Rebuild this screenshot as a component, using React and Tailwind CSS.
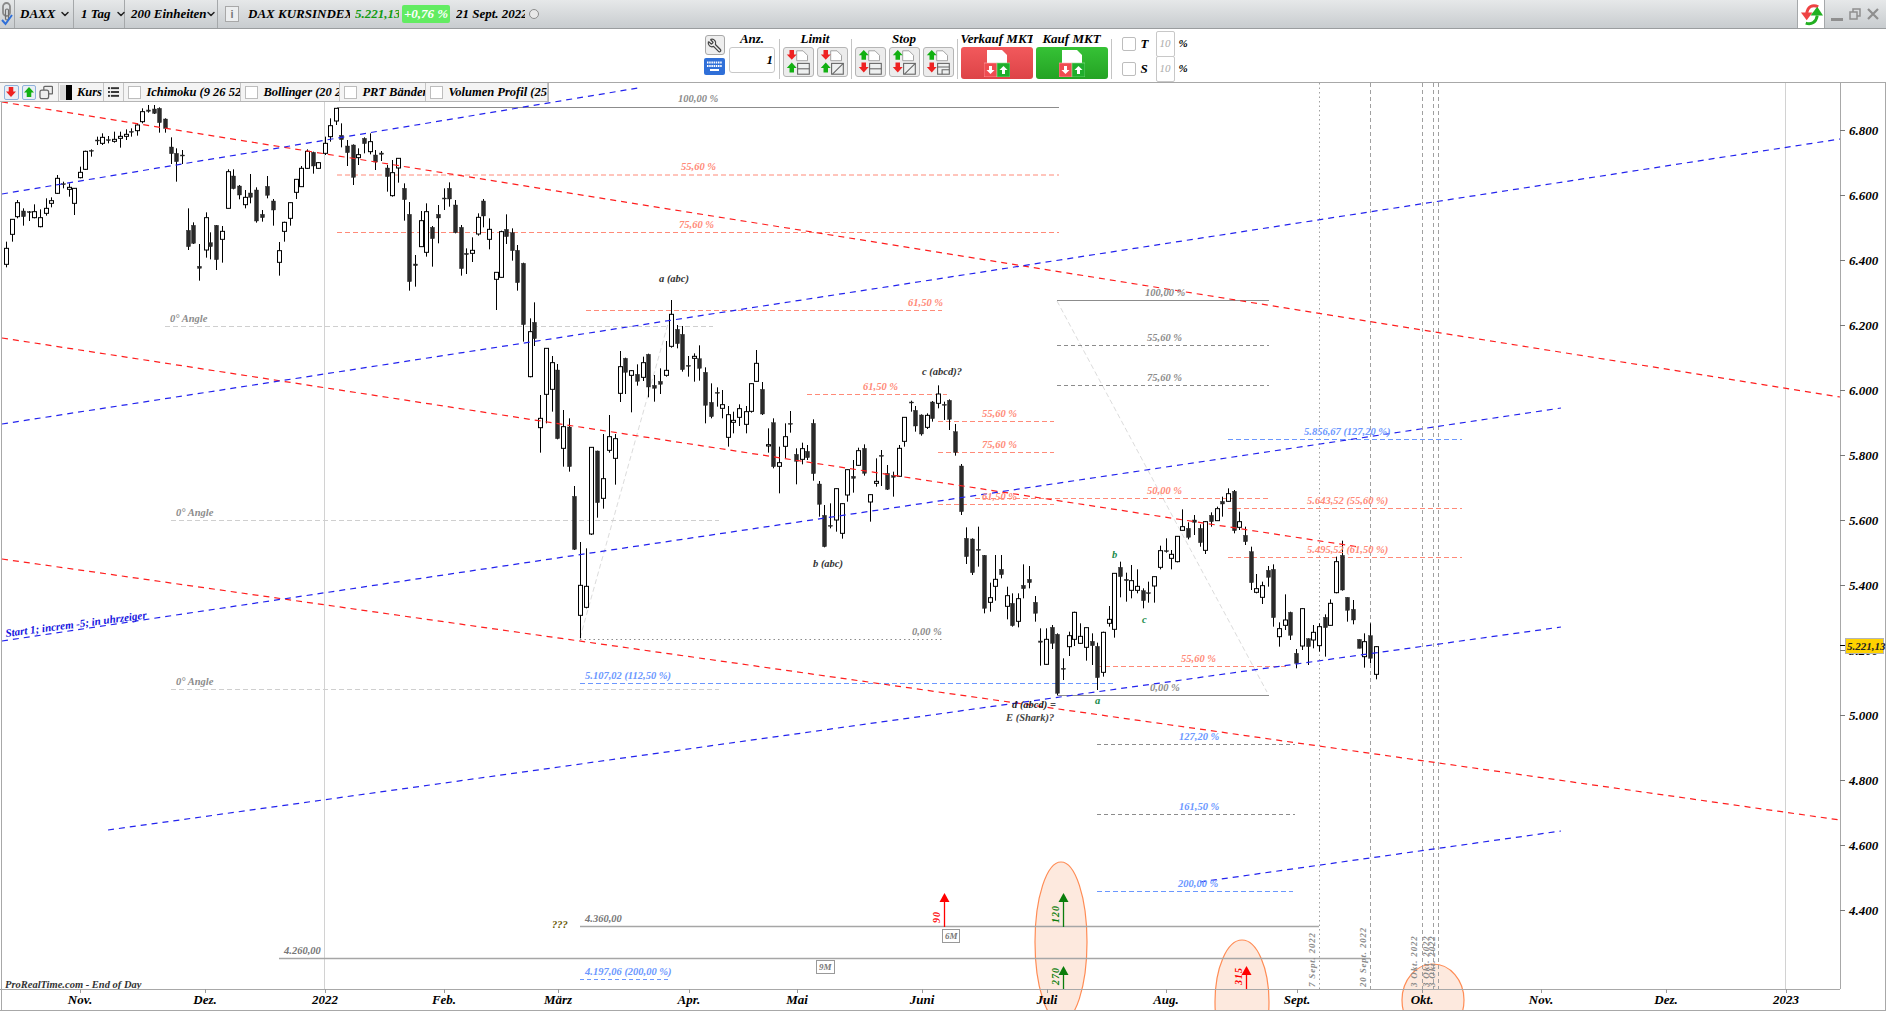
import { ChevronDown, Wrench } from "lucide-react";

// chart readings: [x, high, bodyTop, bodyBottom, low, filled]
const CANDLES_A = [
  [16,455,475,523,532,0],[32,388,388,433,455,0],[45,330,338,380,385,0],[60,355,363,380,407,1],[76,363,365,367,393,1],
  [90,343,365,383,385,0],[105,358,383,410,412,0],[121,325,355,370,377,0],[134,322,332,340,352,0],[150,255,265,310,312,0],
  [165,275,281,284,295,1],[179,280,292,298,320,0],[194,295,295,340,375,0],[210,230,247,263,265,0],[223,182,184,238,240,0],
  [239,178,181,184,200,1],[253,140,150,152,165,1],[267,130,142,160,165,0],[283,138,149,151,160,1],[299,125,148,154,158,0],
  [314,125,139,145,173,0],[328,118,133,139,150,0],[343,115,124,126,140,1],[359,100,105,122,137,0],[372,55,65,95,100,0],
  [388,45,60,64,68,1],[402,45,57,70,72,1],[415,52,55,98,128,1],[431,85,87,115,128,1],[447,142,171,191,222,1],
  [460,175,190,215,275,1],[476,180,195,197,222,1],[491,355,421,470,480,1],[505,397,406,460,462,1],[520,462,529,535,572,1],
  [537,367,383,480,503,0],[549,427,458,470,508,1],[565,405,406,509,540,1],[581,408,424,448,518,0],[597,238,245,355,355,0],
  [608,238,258,296,298,1],[624,285,288,315,328,1],[641,300,322,344,355,0],[654,252,309,322,340,1],[669,292,300,393,398,1],
  [684,360,373,383,395,1],[698,258,289,316,325,1],[713,327,333,360,407,1],[730,456,482,517,557,0],[743,395,397,424,455,0],
  [759,337,338,385,407,0],[774,268,268,307,327,0],[787,228,235,290,290,0],[803,178,184,235,237,0],[818,185,187,228,251,1],
  [832,216,218,235,236,0],[848,140,160,190,195,0],[863,85,107,140,155,0],[879,55,55,93,105,0],[891,100,136,149,172,1],
  [907,150,168,188,228,1],[922,163,165,262,285,1],[936,175,194,203,225,0],[951,142,145,161,190,1],[968,130,155,185,193,0],
  [980,180,195,216,240,1],[995,183,189,193,213,1],[1011,225,234,260,305,1],[1025,210,248,317,320,0],[1041,205,205,234,278,0],
  [1055,280,295,329,392,1],[1069,336,373,575,602,1],[1085,495,522,527,590,1],[1101,363,392,470,470,0],[1114,340,365,487,500,0],
  [1129,408,412,446,530,1],[1144,345,373,384,460,1],[1160,295,324,326,360,1],[1173,277,295,327,350,1],[1189,330,345,428,430,1],
  [1205,405,412,536,557,1],[1218,475,490,494,552,1],[1234,442,481,490,516,0],[1250,370,382,432,437,0],[1262,327,333,378,412,1],
  [1279,385,418,448,478,0],[1295,547,547,568,660,0],[1308,422,425,562,563,0],[1322,373,418,440,462,1],[1338,415,428,482,512,1],
  [1352,465,481,578,602,1],[1367,518,520,704,755,1],[1384,685,725,860,862,0],[1395,637,697,746,768,1],
];

const CANDLES_B = [
  [158,345,415,443,518,0],[173,205,205,343,430,0],[189,228,248,328,395,0],[201,252,270,476,478,1],[218,390,440,505,560,0],
  [232,415,441,560,575,1],[246,618,649,808,810,1],[262,786,916,1006,1075,0],[278,805,919,982,985,0],[291,502,502,762,765,0],
  [306,512,513,668,713,1],[322,462,596,655,686,0],[336,405,470,511,518,0],[352,462,476,535,614,0],[367,213,260,340,366,0],
  [380,233,235,277,342,1],[395,270,272,286,397,0],[410,253,283,304,317,1],[425,230,248,292,303,0],[439,221,223,321,352,1],
  [454,285,316,325,365,1],[470,265,304,313,342,1],[485,183,271,286,290,0],[500,60,103,199,203,0],[515,135,148,191,205,1],
  [528,138,163,269,275,1],[544,228,256,258,290,1],[560,220,229,235,305,0],[573,196,236,265,302,1],[588,262,277,376,430,1],
  [603,310,367,410,415,1],[618,322,337,340,380,1],[633,330,374,385,415,0],[649,378,404,472,500,0],[661,395,421,427,460,0],
  [678,373,386,412,438,0],[694,378,395,433,460,0],[707,310,311,394,398,0],[722,210,250,304,305,0],[737,306,328,402,405,1],
  [753,445,494,498,518,0],[766,415,428,560,565,1],[782,500,548,559,640,0],[798,430,470,499,535,0],[811,393,430,433,458,1],
  [826,505,523,544,613,1],[842,488,506,538,553,0],[855,495,514,533,540,1],[870,418,430,581,602,1],[886,603,612,673,710,1],
  [899,675,706,800,802,1],[915,670,736,739,745,1],[931,625,626,720,755,0],[945,670,671,760,776,0],[960,568,569,645,665,0],
  [975,540,589,595,638,1],[989,503,512,556,558,0],[1003,493,505,580,587,1],[1020,643,644,666,725,0],[1035,535,604,610,620,0],
  [1048,510,526,527,618,1],[1064,555,580,628,630,1],[1079,575,587,592,650,1],[1094,495,505,589,590,0],[1109,412,412,484,500,0],
  [1125,362,366,368,395,1],[1137,378,391,438,455,1],[1152,403,405,462,467,1],[1169,400,406,442,447,0],[1181,363,366,416,425,1],
  [1198,316,342,370,385,0],[1212,365,373,376,420,1],[1225,358,361,418,450,1],[1241,432,455,517,527,1],[1256,552,558,695,705,1],
  [1271,742,775,830,852,1],[1286,775,777,878,885,1],[1302,740,808,811,860,1],[1317,825,826,985,1000,1],[1332,908,953,967,995,0],
  [1347,825,898,919,962,0],[1361,825,868,884,895,1],[1376,920,947,979,1018,0],[1390,940,970,1037,1040,1],[1407,940,956,1024,1042,0],
  [1419,853,916,926,955,1],[1434,858,898,908,925,1],[1450,948,967,1000,1025,1],[1464,1045,1083,1087,1157,1],[1480,1045,1078,1153,1155,0],
  [1495,1035,1042,1090,1107,1],[1508,1060,1063,1240,1245,1],[1524,1135,1165,1168,1200,1],
];

const CANDLES_C = [
  [88,1055,1067,1100,1128,0],[103,995,997,1078,1098,0],[121,1030,1069,1090,1092,0],[139,1042,1043,1102,1142,0],[155,1060,1084,1097,1155,1],
  [171,1088,1099,1193,1230,1],[190,1055,1057,1177,1190,0],[208,978,1018,1030,1040,0],[223,880,880,1048,1073,0],[240,845,862,890,952,1],
  [258,878,898,902,965,1],[274,855,902,931,955,0],[292,868,919,931,940,0],[309,925,932,962,985,1],[325,905,938,940,968,1],
  [343,890,890,918,968,0],[361,797,812,862,868,0],[377,775,812,815,818,1],[394,810,823,835,868,0],[411,768,769,845,847,0],
  [427,688,740,751,751,0],[444,727,745,772,778,1],[462,705,720,727,765,1],[480,733,745,788,800,1],[496,723,725,811,822,0],
  [513,697,706,725,740,1],[532,680,686,722,722,0],[546,650,664,672,710,1],[565,625,641,664,665,0],[581,630,634,752,760,1],
  [598,695,725,742,750,0],[615,740,766,785,795,1],[632,800,815,908,930,1],[649,882,926,937,940,0],[666,905,917,952,972,0],
  [683,858,871,892,920,1],[698,853,868,1013,1040,1],[718,1027,1046,1070,1100,0],[736,943,1020,1036,1050,0],[750,995,997,1066,1080,1],
  [768,1107,1120,1150,1165,1],[787,985,986,1098,1110,0],[804,1075,1076,1100,1155,1],[820,1035,1057,1080,1105,0],[838,1030,1040,1097,1115,0],
  [855,1003,1012,1043,1130,1],[871,958,970,1036,1037,0],[889,830,845,938,940,0],[906,782,826,930,932,1],[921,952,952,991,1025,1],
  [939,960,988,1020,1033,1],[957,1078,1078,1105,1105,1],[973,1060,1085,1130,1163,0],[990,1030,1067,1135,1150,1],[1009,1098,1100,1183,1198,0],
];

const scaled = (rows, ox, oy, sx) =>
  rows.map(([x, h, t, b, l, f]) => ({ x: ox + x / sx, h: oy + h / 3, t: oy + t / 3, b: oy + b / 3, l: oy + l / 3, f }));

const CANDLES = [
  ...scaled(CANDLES_A, 0, 90, 2.613),
  ...scaled(CANDLES_B, 480, 280, 2.613),
  ...scaled(CANDLES_C, 1040, 280, 3),
];

const RED = "#ff1f1f";
const BLUE = "#2323ee";
const SALMON = "#ff8a78";
const SKY = "#6b97ff";
const GREY = "#8c8c8c";

const TREND_LINES = [
  [2, 102, 1840, 397, RED],
  [2, 338, 1359, 547, RED],
  [2, 559, 1840, 820, RED],
  [2, 194, 638, 88, BLUE],
  [2, 424, 1840, 139, BLUE],
  [2, 641, 1561, 408, BLUE],
  [108, 830, 1561, 627, BLUE],
  [1200, 882, 1561, 831, BLUE],
];

// x1, x2, y, colour, dash, width
const LEVELS = [
  [337, 1059, 107, GREY, "", 1.2],
  [337, 1059, 174.5, SALMON, "5 3", 1],
  [337, 1059, 232, SALMON, "5 3", 1],
  [586, 942, 310, SALMON, "5 3", 1],
  [165, 713, 326, "#cfcfcf", "5 3", 1],
  [171, 719, 520, "#cfcfcf", "5 3", 1],
  [171, 719, 689, "#cfcfcf", "5 3", 1],
  [580, 943, 639, GREY, "1.5 3", 1],
  [807, 947, 394, SALMON, "5 3", 1],
  [938, 1054, 421, SALMON, "5 3", 1],
  [938, 1054, 452, SALMON, "5 3", 1],
  [938, 1054, 504, SALMON, "5 3", 1],
  [975, 1269, 498, SALMON, "5 3", 1],
  [1057, 1269, 300, GREY, "", 1.2],
  [1057, 1269, 345, GREY, "4 3", 1],
  [1057, 1269, 385, GREY, "4 3", 1],
  [1057, 1269, 695, GREY, "", 1.2],
  [1097, 1287, 666, SALMON, "5 3", 1],
  [580, 1113, 683, SKY, "5 3", 1],
  [1228, 1462, 439, SKY, "5 3", 1],
  [1228, 1462, 508, SALMON, "5 3", 1],
  [1228, 1462, 557, SALMON, "5 3", 1],
  [1097, 1295, 744, GREY, "4 3", 1],
  [1097, 1295, 814, GREY, "4 3", 1],
  [1097, 1293, 891, SKY, "5 3", 1],
  [580, 1319, 926, "#a6a6a6", "", 1.3],
  [279, 1370, 958, "#a6a6a6", "", 1.3],
  [580, 671, 979, SKY, "4 3", 1],
];

// x, y, text, colour
const LABELS = [
  [678, 102, "100,00 %", GREY],
  [681, 170, "55,60 %", SALMON],
  [679, 228, "75,60 %", SALMON],
  [908, 306, "61,50 %", SALMON],
  [659, 282, "a (abc)", "#333"],
  [170, 322, "0° Angle", GREY],
  [176, 516, "0° Angle", GREY],
  [176, 685, "0° Angle", GREY],
  [912, 635, "0,00 %", GREY],
  [863, 390, "61,50 %", SALMON],
  [922, 375, "c (abcd)?", "#333"],
  [982, 417, "55,60 %", SALMON],
  [982, 448, "75,60 %", SALMON],
  [982, 500, "61,50 %", SALMON],
  [813, 567, "b (abc)", "#333"],
  [1145, 296, "100,00 %", GREY],
  [1147, 341, "55,60 %", GREY],
  [1147, 381, "75,60 %", GREY],
  [1147, 494, "50,00 %", SALMON],
  [1150, 691, "0,00 %", GREY],
  [1181, 662, "55,60 %", SALMON],
  [585, 679, "5.107,02 (112,50 %)", SKY],
  [1304, 435, "5.856,67 (127,20 %)", SKY],
  [1307, 504, "5.643,52 (55,60 %)", SALMON],
  [1307, 553, "5.495,52 (61,50 %)", SALMON],
  [1179, 740, "127,20 %", SKY],
  [1179, 810, "161,50 %", SKY],
  [1178, 887, "200,00 %", SKY],
  [1012, 708, "d (abcd) =", "#222"],
  [1006, 721, "E (Shark)?", "#444"],
  [1112, 558, "b", "#178a4a"],
  [1142, 623, "c", "#178a4a"],
  [1095, 704, "a", "#178a4a"],
  [585, 922, "4.360,00", "#777"],
  [284, 954, "4.260,00", "#777"],
  [552, 928, "???", "#665500"],
  [585, 975, "4.197,06 (200,00 %)", SKY],
  [5, 988, "ProRealTime.com - End of Day", "#333"],
];

const PRICES = ["6.800", "6.600", "6.400", "6.200", "6.000", "5.800", "5.600", "5.400", "5.200", "5.000", "4.800", "4.600", "4.400"];

const MONTHS = [
  [80, "Nov."], [205, "Dez."], [325, "2022"], [444, "Feb."], [558, "März"], [689, "Apr."], [797, "Mai"], [922, "Juni"],
  [1047, "Juli"], [1166, "Aug."], [1297, "Sept."], [1422, "Okt."], [1541, "Nov."], [1666, "Dez."], [1786, "2023"],
];

// vertical date markers
const MARKERS = [
  [1319, "1.5 3", 1315, "7 Sept. 2022"],
  [1370, "4 3", 1366, "20 Sept. 2022"],
  [1422, "4 3", 1417, "3 Okt. 2022"],
  [1433, "4 3", 1429, "3 Okt. 2022"],
  [1438, "4 3", 1435, "3 Okt. 2022"],
];

function Arrow({ x, top, bottom, colour, label }) {
  return (
    <g>
      <line x1={x} x2={x} y1={top + 8} y2={bottom} stroke={colour} strokeWidth="1.3" />
      <polygon points={`${x},${top} ${x + 5},${top + 9} ${x - 5},${top + 9}`} fill={colour} />
      <text
        transform={`rotate(-90 ${x - 5} ${bottom - 4})`}
        x={x - 5}
        y={bottom - 4}
        fontSize="10"
        letterSpacing="1"
        fill={colour}
      >
        {label}
      </text>
    </g>
  );
}

function Chart() {
  return (
    <svg
      viewBox="0 83 1886 928"
      className="block h-full w-full font-['Liberation_Serif',serif] font-bold italic"
    >
      <line x1="324.5" x2="324.5" y1="83" y2="989" stroke="#d2d2d2" />
      <line x1="1785.5" x2="1785.5" y1="83" y2="989" stroke="#d2d2d2" />

      <ellipse cx="1061" cy="942" rx="26" ry="80" fill="#fde9de" stroke="#ff8c55" strokeWidth="1.2" />
      <ellipse cx="1242" cy="1002" rx="27" ry="62" fill="#fde9de" stroke="#ff8c55" strokeWidth="1.2" />
      <ellipse cx="1433" cy="1000" rx="31" ry="36" fill="#fde9de" stroke="#ff8c55" strokeWidth="1.2" />

      <line x1="580" y1="638" x2="671" y2="313" stroke="#dcdcdc" strokeDasharray="5 3" />
      <line x1="1057" y1="301" x2="1267" y2="692" stroke="#dcdcdc" strokeDasharray="5 3" />

      {MARKERS.map(([x, dash]) => (
        <line key={x} x1={x + 0.5} x2={x + 0.5} y1="83" y2="989" stroke="#a0a0a0" strokeDasharray={dash} />
      ))}

      {LEVELS.map(([x1, x2, y, colour, dash, w]) => (
        <line
          key={`${x1}-${y}`}
          x1={x1}
          x2={x2}
          y1={y + 0.5}
          y2={y + 0.5}
          stroke={colour}
          strokeDasharray={dash || undefined}
          strokeWidth={w}
        />
      ))}

      {CANDLES.map((c, i) => {
        const x = Math.round(c.x) + 0.5;
        return (
          <g key={i}>
            <line x1={x} x2={x} y1={c.h} y2={c.l} stroke="#000" />
            <rect
              x={x - 2}
              y={c.t}
              width="4"
              height={Math.max(c.b - c.t, 1)}
              fill={c.f ? "#2a2a2a" : "#fff"}
              stroke={c.f ? "#222" : "#000"}
              strokeWidth={c.f ? 0.4 : 1}
            />
          </g>
        );
      })}

      {TREND_LINES.map(([x1, y1, x2, y2, colour]) => (
        <line
          key={`${x1}-${y1}`}
          x1={x1}
          y1={y1}
          x2={x2}
          y2={y2}
          stroke={colour}
          strokeWidth="1.2"
          strokeDasharray="6 5"
        />
      ))}

      {LABELS.map(([x, y, text, colour]) => (
        <text key={`${x}-${y}`} x={x} y={y} fontSize="10.5" fill={colour}>
          {text}
        </text>
      ))}

      <text transform="rotate(-7.500 6 637)" x="6" y="637" fontSize="11" fill="#1414e0">
        Start 1; increm -5; in uhrzeiger
      </text>

      <Arrow x={944.5} top={893} bottom={927} colour="#ff0000" label="90" />
      <Arrow x={1063.5} top={893} bottom={927} colour="#0b7d0b" label="120" />
      <Arrow x={1063.5} top={966} bottom={989} colour="#0b7d0b" label="270" />
      <Arrow x={1246.5} top={966} bottom={989} colour="#ff0000" label="315" />

      <rect x="942.5" y="929.5" width="17" height="13" fill="#fff" stroke="#999" />
      <text x="945" y="939" fontSize="9" fill="#777">6M</text>
      <rect x="816.5" y="960.5" width="18" height="13" fill="#fff" stroke="#999" />
      <text x="819" y="970" fontSize="9" fill="#777">9M</text>

      {MARKERS.map(([x, , tx, text]) => (
        <text
          key={x}
          transform={`rotate(-90 ${tx} 987)`}
          x={tx}
          y="987"
          fontSize="9"
          letterSpacing="0.8"
          fill="#8a8a8a"
        >
          {text}
        </text>
      ))}

      <line x1="1.5" x2="1.5" y1="83" y2="1011" stroke="#a8a8a8" />
      <line x1="1840.5" x2="1840.5" y1="83" y2="989" stroke="#a8a8a8" />
      <line x1="1885.5" x2="1885.5" y1="83" y2="1011" stroke="#a8a8a8" />
      <line x1="0" x2="1840" y1="989.5" y2="989.5" stroke="#a8a8a8" />
      <line x1="0" x2="1886" y1="1010.5" y2="1010.5" stroke="#a8a8a8" />

      {PRICES.map((p, i) => (
        <g key={p}>
          <line x1="1840" x2="1845" y1={130.5 + i * 65} y2={130.5 + i * 65} stroke="#777" />
          <text x="1849" y={135 + i * 65} fontSize="13" fill="#000">{p}</text>
        </g>
      ))}

      {MONTHS.map(([x, m]) => (
        <g key={x}>
          <line x1={x + 0.5} x2={x + 0.5} y1="989" y2="993" stroke="#999" />
          <text x={x} y="1004" fontSize="13" textAnchor="middle" fill="#000">{m}</text>
        </g>
      ))}

      <line x1="1840" x2="1845" y1="645.5" y2="645.5" stroke="#000" />
      <rect x="1845.5" y="638.5" width="38" height="15" fill="#ffd200" stroke="#b5b5b5" />
      <text x="1847" y="650" fontSize="11" fill="#222">5.221,13</text>
    </svg>
  );
}

function LinkCheckIcon() {
  return (
    <svg viewBox="0 0 14 29" className="h-[29px] w-[14px]">
      <rect x="3" y="3" width="7" height="13" rx="3.5" fill="none" stroke="#8a8a8a" strokeWidth="1.8" />
      <rect x="5.5" y="9" width="3" height="11" rx="1.5" fill="none" stroke="#6f6f6f" strokeWidth="1.2" />
      <path d="M2 20l3.5 4L12 15" fill="none" stroke="#2f6fd8" strokeWidth="2" />
    </svg>
  );
}

function Caret() {
  return <ChevronDown className="ml-[4px] h-[12px] w-[12px] shrink-0 text-[#222]" strokeWidth={3} />;
}

function TopBar() {
  return (
    <div className="flex h-[29px] shrink-0 items-center whitespace-nowrap border-b border-[#9a9d9f] bg-gradient-to-b from-[#e6e8e9] to-[#c8cccf] text-[13px] font-bold italic text-black">
      <div className="flex h-full w-[15px] border-r border-[#a5a8aa]">
        <LinkCheckIcon />
      </div>
      <div className="flex h-full w-[59px] items-center border-r border-[#a5a8aa] pl-[5px]">
        DAXX
        <Caret />
      </div>
      <div className="flex h-full w-[51px] items-center border-r border-[#a5a8aa] pl-[7px]">
        1 Tag
        <Caret />
      </div>
      <div className="flex h-full w-[93px] items-center border-r border-[#a5a8aa] pl-[6px]">
        <span className="w-[70px]">200 Einheiten</span>
        <Caret />
      </div>
      <div className="ml-[7px] flex h-[16px] w-[14px] items-center justify-center border border-[#a8a8a8] bg-[#eceeef] font-['Liberation_Sans',sans-serif] text-[11px] not-italic text-[#777]">
        i
      </div>
      <span className="ml-[9px] w-[102px] overflow-hidden">DAX KURSINDEX</span>
      <span className="ml-[5px] w-[44px] overflow-hidden text-[#129a12]">5.221,13</span>
      <span className="ml-[3px] flex h-[18px] w-[48px] items-center justify-center rounded-[2px] bg-[#62ec62] text-white">
        +0,76 %
      </span>
      <span className="ml-[6px] w-[69px] overflow-hidden">21 Sept. 2022</span>
      <span className="ml-[4px] h-[10px] w-[10px] rounded-full border border-[#8c8c8c] bg-[#e8e8e8]" />
      <div className="ml-auto flex h-full w-[28px] items-center justify-center border-x border-[#a5a8aa] bg-white">
        <svg viewBox="0 0 24 24" className="h-[23px] w-[23px]" fill="none" strokeWidth="3">
          <path d="M19 4C13 1 8 4 7 11" stroke="#ee4444" />
          <path d="M1 10h12l-6 8z" fill="#ee4444" />
          <path d="M6 21c6 2 11-1 12-8" stroke="#22b022" />
          <path d="M11 13h13l-6-9z" fill="#22b022" />
        </svg>
      </div>
      <div className="flex h-full w-[61px] items-center gap-[6px] pl-[6px]">
        <span className="mt-[11px] h-[3px] w-[12px] bg-[#8f8f8f]" />
        <svg viewBox="0 0 12 12" className="h-[12px] w-[12px]" fill="none" stroke="#8f8f8f" strokeWidth="1.5">
          <rect x="1" y="4" width="7" height="7" />
          <path d="M4 4V1h7v7H8" />
        </svg>
        <svg viewBox="0 0 12 12" className="h-[12px] w-[12px]" stroke="#8f8f8f" strokeWidth="2.2">
          <path d="M1 1l10 10M11 1L1 11" />
        </svg>
      </div>
    </div>
  );
}

const ARROW_RED = "M3 0h5v5h3l-5.5 6L0 5h3z";
const ARROW_GREEN = "M5.5 0L11 6H8v5H3V6H0z";

function OrderGlyph({ first, second, shape }) {
  return (
    <svg viewBox="0 0 30 30" className="h-[27px] w-[27px]">
      <path d="M13 2h7l5 5v6H13z" fill="#fff" stroke="#9a9a9a" />
      <g transform="translate(2 1)"><path d={first} fill={first === ARROW_RED ? "#ee2222" : "#12b012"} /></g>
      <g transform="translate(2 15)"><path d={second} fill={second === ARROW_RED ? "#ee2222" : "#12b012"} /></g>
      <rect x="14" y="16" width="13" height="12" fill="#eef0f0" stroke="#666" strokeWidth="1.2" />
      {shape === "flat" && <line x1="14" x2="27" y1="22" y2="22" stroke="#666" strokeWidth="1.2" />}
      {shape === "slope" && <line x1="15" x2="27" y1="28" y2="16" stroke="#666" strokeWidth="1.2" />}
      {shape === "step" && <path d="M14 20h13M19 28v-5h8" fill="none" stroke="#666" strokeWidth="1.2" />}
    </svg>
  );
}

function OrderButton(props) {
  return (
    <button className="flex h-[30px] w-[31px] items-center justify-center rounded-[3px] border border-[#b5b5b5] bg-[#ececec]">
      <OrderGlyph {...props} />
    </button>
  );
}

function MarketGlyph() {
  return (
    <svg viewBox="0 0 26 28" className="h-[28px] w-[26px]">
      <path d="M3 1h15l5 5v14H3z" fill="#fff" />
      <rect x="0" y="14" width="13" height="14" fill="#ef4b50" stroke="#ffb0b0" strokeWidth="0.6" />
      <rect x="13" y="14" width="13" height="14" fill="#1fae2c" stroke="#8fe08f" strokeWidth="0.6" />
      <path d="M5 17h3v4h2.500l-4 4-4-4H5z" fill="#fff" />
      <path d="M19.500 17l4 4H21v4h-3v-4h-2.500z" fill="#fff" />
    </svg>
  );
}

function KeyboardGlyph() {
  return (
    <svg viewBox="0 0 21 17" className="mt-[3px] h-[17px] w-[21px]">
      <rect width="21" height="17" rx="2" fill="#2f6fd8" />
      <path d="M3 4.500h15M3 8h15" stroke="#fff" strokeWidth="2" strokeDasharray="1.500 0.700" />
      <path d="M6 12h9" stroke="#fff" strokeWidth="2" />
    </svg>
  );
}

function Sep() {
  return <div className="mx-[3px] mt-[10px] h-[40px] w-px bg-[#c4c4c4]" />;
}

function PercentRow({ letter }) {
  return (
    <div className="flex h-[25px] items-center">
      <span className="h-[14px] w-[14px] rounded-[2px] border border-[#bdbdbd] bg-white" />
      <span className="ml-[5px] w-[15px] text-[13px] font-bold italic">{letter}</span>
      <span className="flex h-[26px] w-[19px] items-center justify-center rounded-[2px] border border-[#c8c8c8] bg-white text-[11px] italic text-[#aaa]">
        10
      </span>
      <span className="ml-[4px] text-[11px] font-bold italic">%</span>
    </div>
  );
}

function OrderBar() {
  return (
    <div className="flex h-[54px] shrink-0 justify-center border-b border-[#a8a8a8] bg-white pl-[9px] text-[13px] text-black">
      <div className="mr-[3px] flex w-[22px] flex-col items-center pt-[6px]">
        <span className="flex h-[20px] w-[20px] items-center justify-center rounded-[3px] border border-[#a8a8a8] bg-[#eeeeee]">
          <Wrench className="h-[15px] w-[15px] -scale-x-100 text-[#444]" strokeWidth={2} />
        </span>
        <KeyboardGlyph />
      </div>
      <div className="flex w-[47px] flex-col items-center">
        <span className="h-[18px] font-bold italic">Anz.</span>
        <span className="flex h-[26px] w-[46px] items-center justify-end rounded-[3px] border border-[#c8c8c8] pr-[1px] font-bold italic">
          1
        </span>
      </div>
      <Sep />
      <div className="flex flex-col items-center">
        <span className="h-[18px] font-bold italic">Limit</span>
        <div className="flex gap-[3px]">
          <OrderButton first={ARROW_RED} second={ARROW_GREEN} shape="flat" />
          <OrderButton first={ARROW_RED} second={ARROW_GREEN} shape="slope" />
        </div>
      </div>
      <Sep />
      <div className="flex flex-col items-center">
        <span className="h-[18px] font-bold italic">Stop</span>
        <div className="flex gap-[3px]">
          <OrderButton first={ARROW_GREEN} second={ARROW_RED} shape="flat" />
          <OrderButton first={ARROW_GREEN} second={ARROW_RED} shape="slope" />
          <OrderButton first={ARROW_GREEN} second={ARROW_RED} shape="step" />
        </div>
      </div>
      <Sep />
      <div className="flex gap-[3px]">
        <div className="flex w-[72px] flex-col items-center">
          <span className="h-[18px] w-full overflow-hidden whitespace-nowrap text-center font-bold italic">Verkauf MKT</span>
          <span className="flex h-[32px] w-[72px] items-center justify-center rounded-[3px] bg-gradient-to-b from-[#f2595c] to-[#dd4347]">
            <MarketGlyph />
          </span>
        </div>
        <div className="flex w-[72px] flex-col items-center">
          <span className="h-[18px] w-full overflow-hidden whitespace-nowrap text-center font-bold italic">Kauf MKT</span>
          <span className="flex h-[32px] w-[72px] items-center justify-center rounded-[3px] bg-gradient-to-b from-[#36c236] to-[#24a324]">
            <MarketGlyph />
          </span>
        </div>
      </div>
      <Sep />
      <div className="ml-[7px] flex w-[70px] flex-col pt-[2px]">
        <PercentRow letter="T" />
        <PercentRow letter="S" />
      </div>
    </div>
  );
}

function LegendCheck({ label, width }) {
  return (
    <div className="flex h-full items-center border-r border-[#c4c4c4] pl-[4px]" style={{ width }}>
      <span className="h-[13px] w-[13px] shrink-0 border border-[#bdbdbd] bg-white" />
      <span className="ml-[5px] overflow-hidden whitespace-nowrap">{label}</span>
    </div>
  );
}

function Legend() {
  return (
    <div className="absolute left-0 top-0 flex h-[19px] w-[549px] items-center border-b border-r border-[#b5b5b5] bg-[#f4f4f4] pl-[4px] text-[12.5px] font-bold italic text-black">
      <span className="flex h-[15px] w-[15px] items-center justify-center rounded-[2px] border border-[#8fb2dc] bg-[#e9eef5]">
        <svg viewBox="0 0 11 11" className="h-[10px] w-[10px]"><path d={ARROW_RED} fill="#ee2222" /></svg>
      </span>
      <span className="ml-[3px] flex h-[15px] w-[15px] items-center justify-center rounded-[2px] border border-[#8fb2dc] bg-[#e9eef5]">
        <svg viewBox="0 0 11 11" className="h-[10px] w-[10px]"><path d={ARROW_GREEN} fill="#12b012" /></svg>
      </span>
      <svg viewBox="0 0 15 15" className="ml-[3px] h-[15px] w-[15px]" fill="#eee" stroke="#666" strokeWidth="1.3">
        <rect x="5" y="1" width="9" height="8" rx="1" />
        <rect x="1" y="5" width="9" height="9" rx="2" />
      </svg>
      <div className="ml-[5px] mr-[1px] h-full w-px bg-[#c4c4c4]" />
      <span className="h-[15px] w-[6px] bg-[#d8d8d8]" />
      <span className="h-[15px] w-[6px] bg-black" />
      <span className="ml-[5px] w-[25px] whitespace-nowrap">Kurs</span>
      <div className="ml-[1px] h-full w-px bg-[#c4c4c4]" />
      <svg viewBox="0 0 12 12" className="mx-[4px] h-[12px] w-[12px]" fill="#333">
        <rect x="0" y="1" width="2" height="2" /><rect x="3" y="1" width="9" height="2" />
        <rect x="0" y="5" width="2" height="2" /><rect x="3" y="5" width="9" height="2" />
        <rect x="0" y="9" width="2" height="2" /><rect x="3" y="9" width="9" height="2" />
      </svg>
      <div className="h-full w-px bg-[#c4c4c4]" />
      <LegendCheck label="Ichimoku (9 26 52" width={117} />
      <LegendCheck label="Bollinger (20 2" width={99} />
      <LegendCheck label="PRT Bänder" width={86} />
      <LegendCheck label="Volumen Profil (25" width={122} />
    </div>
  );
}

export default function App() {
  return (
    <div className="flex h-[1011px] w-[1886px] flex-col overflow-hidden bg-white font-['Liberation_Serif',serif]">
      <TopBar />
      <OrderBar />
      <div className="relative min-h-0 flex-1">
        <Chart />
        <Legend />
      </div>
    </div>
  );
}
